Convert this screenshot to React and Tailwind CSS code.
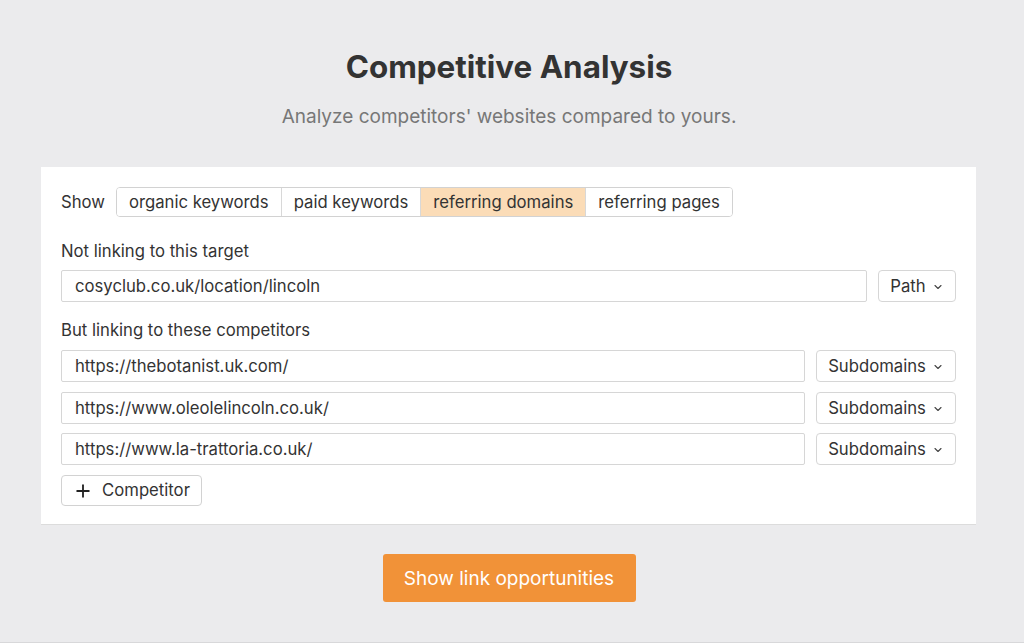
import { ChevronDown, Plus } from "lucide-react";

const tabs = [
  { label: "organic keywords", active: false },
  { label: "paid keywords", active: false },
  { label: "referring domains", active: true },
  { label: "referring pages", active: false },
];

const competitors = [
  "https://thebotanist.uk.com/",
  "https://www.oleolelincoln.co.uk/",
  "https://www.la-trattoria.co.uk/",
];

function UrlInput({ value }) {
  return (
    <div className="flex-1 h-[32px] border border-[#d6d6d6] rounded-[2px] bg-white flex items-center px-[13px] pt-[2px] text-[16.7px] text-[#333]">
      {value}
    </div>
  );
}

function ModeSelect({ label, width }) {
  return (
    <button
      className={`${width} h-[32px] ml-[11px] border border-[#d6d6d6] rounded-[4px] bg-white flex items-center justify-center gap-[6px] pt-[2px] text-[16.7px] text-[#333]`}
    >
      {label}
      <ChevronDown size={12} strokeWidth={2.25} className="text-[#444]" />
    </button>
  );
}

export default function App() {
  return (
    <div
      className="w-full h-[643px] bg-[#ebebed] border-b border-[#d8d8da] flex flex-col"
      style={{ fontFamily: "Inter, 'Noto Sans', sans-serif" }}
    >
      <h1 className="pt-[49px] pr-[6px] text-center text-[31.4px] leading-[36px] font-bold text-[#333]">
        Competitive Analysis
      </h1>
      <p className="mt-[18px] pr-[6px] text-center text-[19px] leading-[28px] text-[#777]">
        Analyze competitors' websites compared to yours.
      </p>

      {/* card */}
      <section className="mt-[36px] ml-[41px] w-[935px] bg-white border-b border-[#dcdcdc] px-[20px] pt-[20px] pb-[18px]">
        <div className="flex items-center">
          <span className="text-[16.7px] text-[#333] mr-[11px] pt-[2px]">Show</span>
          <div className="flex h-[30px] border border-[#d2d2d2] rounded-[4px] overflow-hidden">
            {tabs.map((t, i) => (
              <div
                key={t.label}
                className={`flex items-center px-[12px] pt-[2px] text-[16.7px] text-[#333] ${
                  i > 0 ? "border-l border-[#d8d8d8]" : ""
                } ${t.active ? "bg-[#fbdcb7]" : "bg-white"}`}
              >
                {t.label}
              </div>
            ))}
          </div>
        </div>

        <p className="mt-[22px] text-[16.7px] leading-[24px] text-[#333]">Not linking to this target</p>
        <div className="mt-[7px] flex">
          <UrlInput value="cosyclub.co.uk/location/lincoln" />
          <ModeSelect label="Path" width="w-[78px]" />
        </div>

        <p className="mt-[16px] text-[16.7px] leading-[24px] text-[#333]">But linking to these competitors</p>
        <div className="mt-[8px] flex flex-col gap-[9.5px]">
          {competitors.map((c) => (
            <div key={c} className="flex">
              <UrlInput value={c} />
              <ModeSelect label="Subdomains" width="w-[140px]" />
            </div>
          ))}
        </div>

        <button className="mt-[10px] h-[31px] w-[141px] border border-[#d2d2d2] rounded-[4px] bg-white flex items-center justify-center gap-[9px] pt-[1px] text-[16.7px] text-[#333]">
          <Plus size={20} strokeWidth={2.2} className="text-[#222]" />
          Competitor
        </button>
      </section>

      <div className="mt-[29px] flex justify-center pr-[6px]">
        <button className="h-[48px] w-[253px] rounded-[3px] bg-[#f19238] pt-[2px] text-white text-[19px]">
          Show link opportunities
        </button>
      </div>
    </div>
  );
}
